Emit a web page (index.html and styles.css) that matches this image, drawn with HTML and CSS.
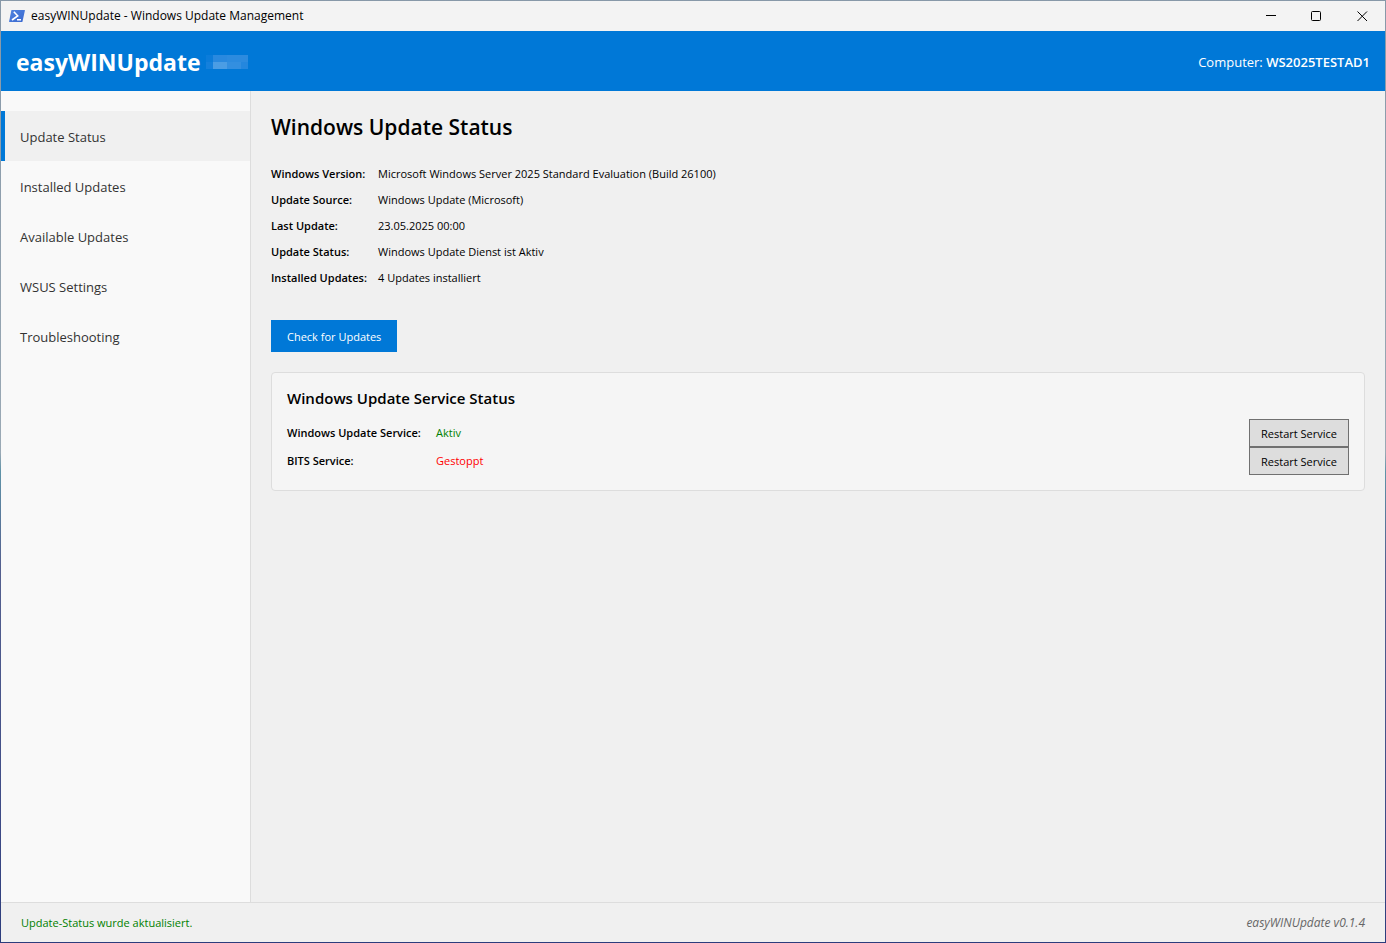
FILE: index.html
```html
<!DOCTYPE html>
<html lang="en">
<head>
<meta charset="utf-8">
<meta name="viewport" content="width=device-width, initial-scale=1">
<title>easyWINUpdate - Windows Update Management</title>
<link rel="stylesheet" href="styles.css">
</head>
<body>
<div class="window">
  <div class="titlebar">
    <svg class="app-icon" viewBox="0 0 16 12" aria-hidden="true">
      <defs><linearGradient id="ps" x1="0" y1="0" x2="1" y2="1"><stop offset="0" stop-color="#4f84e0"/><stop offset="1" stop-color="#3a68cf"/></linearGradient></defs>
      <path d="M3 0H15.400Q16 0 15.900.6L13.500 11.400Q13.300 12 12.700 12H.6Q0 12 .1 11.400L2.300.6Q2.500 0 3 0Z" fill="url(#ps)"/>
      <path d="M4.800 1.800L8.700 5.800L3 10M8 9.700H12" fill="none" stroke="#fff" stroke-width="1.600"/>
    </svg>
    <span class="window-title">easyWINUpdate - Windows Update Management</span>
    <div class="window-controls">
      <button type="button" aria-label="Minimize"><svg viewBox="0 0 11 11"><path d="M1 4.500H11"/></svg></button>
      <button type="button" aria-label="Maximize"><svg viewBox="0 0 11 11"><rect x=".5" y=".5" width="9" height="9" rx="1"/></svg></button>
      <button type="button" aria-label="Close"><svg viewBox="0 0 11 11"><path d="M.5.500L10 10M10 .5L.5 10"/></svg></button>
    </div>
  </div>

  <header class="banner">
    <div class="brand">easyWINUpdate</div>
    <svg class="redacted" viewBox="0 0 42 14" aria-hidden="true">
      <rect width="7" height="7" fill="#0b7cda"/><rect y="7" width="7" height="7" fill="#1480dc"/>
      <rect x="7" width="14" height="7" fill="#2989df"/><rect x="21" width="21" height="7" fill="#2c8bdf"/>
      <rect x="7" y="7" width="14" height="7" fill="#4b9de4"/><rect x="21" y="7" width="14" height="7" fill="#338fe0"/><rect x="35" y="7" width="7" height="7" fill="#2487de"/>
    </svg>
    <div class="computer">Computer: <strong>WS2025TESTAD1</strong></div>
  </header>

  <div class="workspace">
    <nav class="sidebar">
      <a class="nav-item active" href="#status" aria-current="page">Update Status</a>
      <a class="nav-item" href="#installed">Installed Updates</a>
      <a class="nav-item" href="#available">Available Updates</a>
      <a class="nav-item" href="#wsus">WSUS Settings</a>
      <a class="nav-item" href="#troubleshooting">Troubleshooting</a>
    </nav>

    <main class="content" id="status">
      <h1>Windows Update Status</h1>
      <dl class="details">
        <dt>Windows Version:</dt><dd>Microsoft Windows Server 2025 Standard Evaluation (Build 26100)</dd>
        <dt>Update Source:</dt><dd>Windows Update (Microsoft)</dd>
        <dt>Last Update:</dt><dd>23.05.2025 00:00</dd>
        <dt>Update Status:</dt><dd>Windows Update Dienst ist Aktiv</dd>
        <dt>Installed Updates:</dt><dd>4 Updates installiert</dd>
      </dl>
      <button class="primary" type="button">Check for Updates</button>

      <section class="card">
        <h2>Windows Update Service Status</h2>
        <div class="services">
          <span class="service-name">Windows Update Service:</span>
          <span class="running">Aktiv</span>
          <button class="restart" type="button">Restart Service</button>
          <span class="service-name">BITS Service:</span>
          <span class="stopped">Gestoppt</span>
          <button class="restart" type="button">Restart Service</button>
        </div>
      </section>
    </main>
  </div>

  <footer class="statusbar">
    <span class="message">Update-Status wurde aktualisiert.</span>
    <em class="version">easyWINUpdate v0.1.4</em>
  </footer>
</div>
</body>
</html>
```
FILE: styles.css
```css
* { box-sizing: border-box; }

body {
  margin: 0;
  min-height: 100vh;
  padding: 1px;
  display: flex;
  background: linear-gradient(#8798a8 0, #9aa9b5 48%, #5f93a8 50%, #54608f 60%, #3d4a86 88%, #2c3c7c 100%);
  color: #000;
  font-family: "Open Sans", sans-serif;
  font-size: 11px;
  line-height: 16px;
}

button { font: inherit; }

.window {
  flex: 1;
  display: flex;
  flex-direction: column;
  background: #f0f0f0;
}

.titlebar {
  display: flex;
  align-items: center;
  height: 30px;
  padding-left: 8px;
  background: #f3f3f3;
  font-size: 12px;
}

.app-icon {
  width: 16px;
  height: 12px;
  margin-right: 6px;
}

.window-controls {
  display: flex;
  margin-left: auto;
}

.window-controls button {
  display: grid;
  place-items: center;
  width: 46px;
  height: 30px;
  padding: 0;
  border: 0;
  background: none;
}

.window-controls svg {
  width: 11px;
  height: 11px;
  fill: none;
  stroke: #000;
}

.banner {
  display: flex;
  align-items: center;
  height: 60px;
  padding: 2px 15px 0;
  background: #0078d7;
  color: #fff;
}

.brand {
  font-size: 23px;
  font-weight: 700;
  line-height: 32px;
}

.redacted {
  width: 42px;
  height: 14px;
  margin-left: 5px;
}

.computer {
  margin-left: auto;
  font-size: 13px;
}

.computer strong { font-weight: 600; }

.workspace {
  flex: 1;
  display: flex;
}

.sidebar {
  width: 250px;
  flex: none;
  padding-top: 20px;
  border-right: 1px solid #ddd;
  background: #f9f9f9;
}

.nav-item {
  display: flex;
  align-items: center;
  height: 50px;
  padding: 2px 15px 0;
  border-left: 4px solid transparent;
  color: #333;
  font-size: 13px;
  text-decoration: none;
}

.nav-item.active {
  border-left-color: #0078d7;
  background: #f0f0f0;
}

.content {
  flex: 1;
  padding: 20px;
}

h1 {
  margin: 0 0 18px;
  font-size: 21px;
  font-weight: 600;
  line-height: 32px;
}

.details {
  display: grid;
  grid-template-columns: 107px 1fr;
  grid-auto-rows: 26px;
  align-items: center;
  margin: 0 0 29px;
}

dt, .service-name {
  font-weight: 600;
  white-space: nowrap;
}

dd { margin: 0; }

.primary {
  height: 32px;
  padding: 2px 16px 0;
  border: 0;
  background: #0078d7;
  color: #fff;
}

.card {
  margin-top: 20px;
  padding: 15px;
  border: 1px solid #ddd;
  border-radius: 4px;
  background: #f5f5f5;
}

h2 {
  margin: 0 0 10px;
  font-size: 15px;
  font-weight: 600;
  line-height: 21px;
}

.services {
  display: grid;
  grid-template-columns: 149px 1fr auto;
  grid-auto-rows: 28px;
  align-items: center;
}

.restart {
  height: 28px;
  padding: 2px 11px 0;
  border: 1px solid #707070;
  background: #ddd;
  color: #000;
}

.running, .message { color: #008000; }
.stopped { color: #f00; }

.statusbar {
  display: flex;
  align-items: center;
  justify-content: space-between;
  height: 40px;
  padding: 0 20px;
  border-top: 1px solid #ddd;
}

.version {
  color: #666;
  font-size: 12px;
}
```
